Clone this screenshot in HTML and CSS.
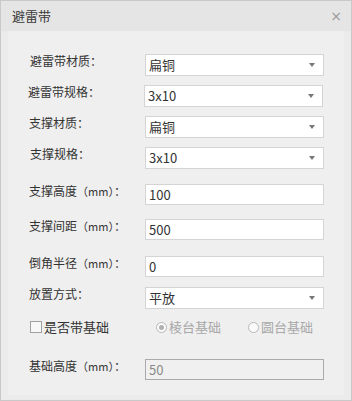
FILE: index.html
```html
<!DOCTYPE html>
<html lang="zh">
<head>
<meta charset="utf-8">
<link rel="stylesheet" href="styles.css">
</head>
<body>
<div class="dialog">
  <div class="titlebar">
    <span class="title">避雷带</span>
    <span class="close">×</span>
  </div>
  <div class="body">
    <div class="panel">
      <div class="row r-sel first">
        <span class="label l1">避雷带材质：</span>
        <div class="ctrl select"><span>扁铜</span><i class="arrow"></i></div>
      </div>
      <div class="row r-sel">
        <span class="label l2">避雷带规格：</span>
        <div class="ctrl select"><span>3x10</span><i class="arrow"></i></div>
      </div>
      <div class="row r-sel">
        <span class="label">支撑材质：</span>
        <div class="ctrl select"><span>扁铜</span><i class="arrow"></i></div>
      </div>
      <div class="row r-sel">
        <span class="label l1">支撑规格：</span>
        <div class="ctrl select"><span>3x10</span><i class="arrow"></i></div>
      </div>
      <div class="row r-in gap-a">
        <span class="label">支撑高度<span class="paren">（mm）</span>：</span>
        <div class="ctrl input"><span>100</span></div>
      </div>
      <div class="row r-in gap-b">
        <span class="label">支撑间距<span class="paren">（mm）</span>：</span>
        <div class="ctrl input"><span>500</span></div>
      </div>
      <div class="row r-in gap-c">
        <span class="label">倒角半径<span class="paren">（mm）</span>：</span>
        <div class="ctrl input"><span>0</span></div>
      </div>
      <div class="row r-sel gap-d">
        <span class="label">放置方式：</span>
        <div class="ctrl select"><span>平放</span><i class="arrow"></i></div>
      </div>
      <div class="row check-row">
        <label class="check"><i class="box"></i>是否带基础</label>
        <label class="radio r1"><i class="dot on"></i>棱台基础</label>
        <label class="radio r2"><i class="dot"></i>圆台基础</label>
      </div>
      <div class="row r-in">
        <span class="label">基础高度<span class="paren">（mm）</span>：</span>
        <div class="ctrl input disabled"><span>50</span></div>
      </div>
    </div>
  </div>
</div>
</body>
</html>
```

FILE: styles.css
```css
* { box-sizing: border-box; }
html, body { margin: 0; padding: 0; }
body {
  width: 352px;
  height: 401px;
  font-family: "Noto Sans CJK SC", "Noto Sans", sans-serif;
  color: #333;
  background: #fff;
}
.dialog {
  width: 352px;
  height: 401px;
  border: 1px solid #c9c9c9;
  display: flex;
  flex-direction: column;
  background: #ebebeb;
}
.titlebar {
  height: 30px;
  flex: none;
  background: #e5e5e5;
  display: flex;
  align-items: center;
  justify-content: space-between;
  padding: 0 9px 0 11px;
}
.title {
  font-size: 13px;
  color: #3a3a3a;
  line-height: 16px;
}
.close {
  font-family: "DejaVu Sans", sans-serif;
  font-size: 14px;
  color: #9a9a9a;
  line-height: 16px;
}
.body {
  flex: 1;
  padding: 0 7px 7px 7px;
}
.panel {
  height: 100%;
  background: #efefef;
  padding: 23px 0 0 21px;
  display: flex;
  flex-direction: column;
}
.row {
  display: flex;
  align-items: flex-start;
  flex: none;
}
.r-sel { height: 31px; }
.r-in { height: 36px; }
.gap-a { margin-top: 6px; }
.gap-b { margin-top: -1px; }
.gap-c { margin-top: 1px; }
.gap-d { margin-top: -5px; }
.label {
  width: 116px;
  font-size: 12px;
  line-height: 16px;
  color: #333;
  margin-top: -1px;
  white-space: nowrap;
}
.l1 { padding-left: 1px; }
.l2 { margin-left: -1px; }
.paren { font-size: 11px; }
.ctrl {
  width: 179px;
  height: 22px;
  background: #fff;
  border: 1px solid #d4d4d4;
  display: flex;
  align-items: center;
  justify-content: space-between;
  padding: 0 8px 0 3px;
  font-size: 13px;
  color: #333;
}
.ctrl span { line-height: 16px; }
.input { height: 21px; }
.arrow {
  width: 0;
  height: 0;
  border-left: 3px solid transparent;
  border-right: 3px solid transparent;
  border-top: 4px solid #777;
}
.disabled {
  background: #f0f0f0;
  border-color: #ababab;
  color: #8a8a8a;
}
.check-row {
  height: 41px;
  padding-top: 1px;
  font-size: 13px;
  line-height: 16px;
}
.check {
  display: flex;
  align-items: center;
  width: 127px;
  padding-left: 1px;
  color: #333;
}
.box {
  width: 12px;
  height: 12px;
  border: 1px solid #a0a0a0;
  background: #f8f8f8;
  margin-right: 2px;
}
.radio {
  display: flex;
  align-items: center;
  color: #a8a8a8;
}
.r1 { width: 92px; }
.dot {
  width: 11px;
  height: 11px;
  border-radius: 50%;
  border: 1px solid #b8b8b8;
  background: #fafafa;
  margin-right: 2px;
  display: flex;
  align-items: center;
  justify-content: center;
}
.dot.on::after {
  content: "";
  width: 5px;
  height: 5px;
  border-radius: 50%;
  background: #b0b0b0;
}
```
